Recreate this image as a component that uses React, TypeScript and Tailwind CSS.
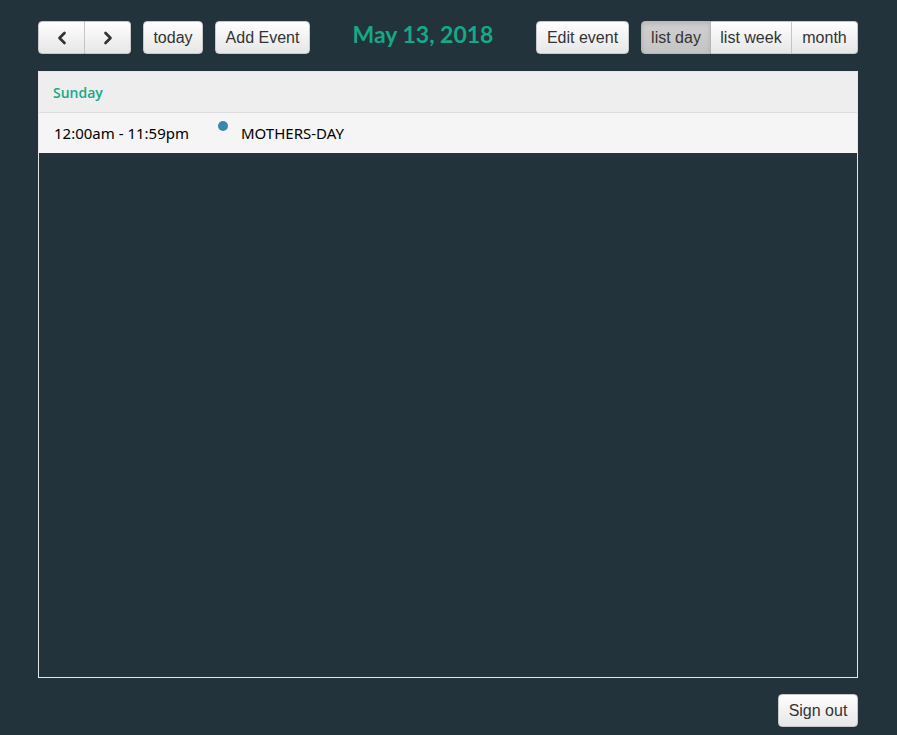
import { ChevronLeft, ChevronRight } from "lucide-react"

const btn =
  "h-[33px] px-[8px] whitespace-nowrap text-[16px] text-[#333] bg-gradient-to-b from-white to-[#e6e6e6] border border-[#c8c8c8] shadow-[inset_0_1px_0_rgba(255,255,255,0.2),0_1px_2px_rgba(0,0,0,0.05)] flex items-center justify-center"

export default function App() {
  return (
    <div
      className="min-h-screen w-full bg-[#22333c] px-[38px] pt-[21px]"
      style={{ fontFamily: '"Liberation Sans", Arial, sans-serif' }}
    >
      <div className="w-[820px]">
        {/* toolbar */}
        <div className="flex items-center h-[33px]">
          <div className="flex">
            <button className={`${btn} w-[47px] rounded-l-[4px]`}>
              <ChevronLeft size={20} strokeWidth={3.2} />
            </button>
            <button className={`${btn} w-[46px] rounded-r-[4px] border-l-0`}>
              <ChevronRight size={20} strokeWidth={3.2} />
            </button>
          </div>
          <button className={`${btn} ml-[12px] w-[60px] rounded-[4px]`}>today</button>
          <button className={`${btn} ml-[12px] w-[95px] rounded-[4px]`}>Add Event</button>
          <div className="flex-1 flex justify-center">
            <h2
              className="text-[23px] font-bold text-[#17a886] leading-none -mt-[6px]"
              style={{ fontFamily: 'Lato, "Open Sans", sans-serif' }}
            >
              May 13, 2018
            </h2>
          </div>
          <button className={`${btn} w-[93px] rounded-[4px]`}>Edit event</button>
          <div className="flex ml-[12px]">
            <button className="h-[33px] w-[70px] whitespace-nowrap text-[16px] text-[#333] bg-gradient-to-b from-[#d0d0d0] to-[#c4c4c4] border border-[#b8b8b8] rounded-l-[4px] shadow-[inset_0_2px_4px_rgba(0,0,0,0.12)]">
              list day
            </button>
            <button className={`${btn} w-[81px] border-l-0`}>list week</button>
            <button className={`${btn} w-[66px] rounded-r-[4px] border-l-0`}>month</button>
          </div>
        </div>

        {/* list view */}
        <div className="mt-[17px] h-[607px] border border-[#e6e6e6]">
          <div
            className="h-[41px] bg-[#eeeeee] border-b border-[#dddddd] flex items-center px-[14px] text-[14px] font-semibold text-[#17a886]"
            style={{ fontFamily: '"Open Sans", "Noto Sans", sans-serif' }}
          >
            Sunday
          </div>
          <div
            className="h-[40px] bg-[#f5f5f5] flex items-center text-[15px] text-black"
            style={{ fontFamily: '"Noto Sans", "Open Sans", sans-serif' }}
          >
            <div className="w-[170px] pl-[15px]">12:00am - 11:59pm</div>
            <div className="w-[32px] flex justify-start pl-[9px] self-start pt-[8px]">
              <span className="block w-[10px] h-[10px] rounded-full bg-[#3a87ad]" />
            </div>
            <div>MOTHERS-DAY</div>
          </div>
        </div>

        <div className="flex justify-end mt-[16px]">
          <button className={`${btn} w-[80px] rounded-[4px] h-[32px]`}>Sign out</button>
        </div>
      </div>
    </div>
  )
}
